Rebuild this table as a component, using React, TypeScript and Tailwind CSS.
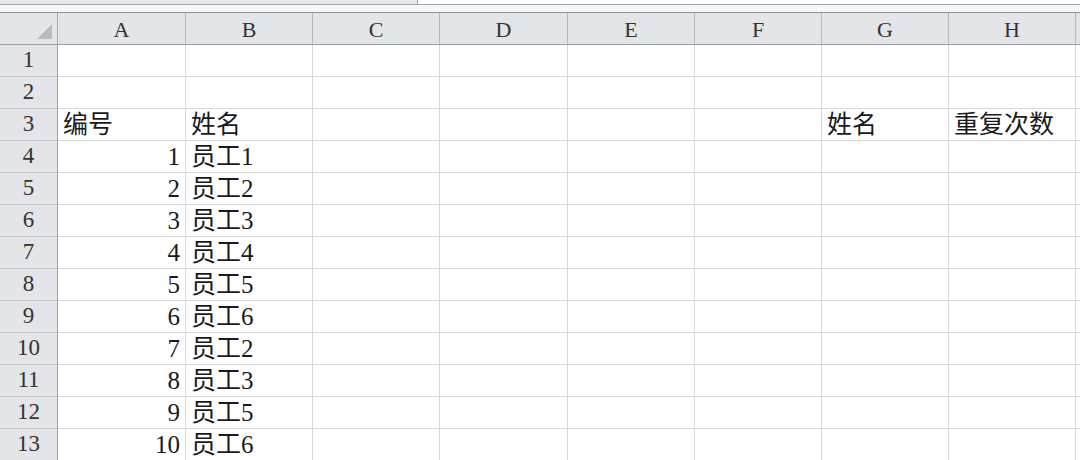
const cols = [
  { key: 'A', w: 'w-[128px]' },
  { key: 'B', w: 'w-[127px]' },
  { key: 'C', w: 'w-[127px]' },
  { key: 'D', w: 'w-[128px]' },
  { key: 'E', w: 'w-[127px]' },
  { key: 'F', w: 'w-[127px]' },
  { key: 'G', w: 'w-[127px]' },
  { key: 'H', w: 'w-[127px]' },
];

type Cell = { text: string; align?: 'left' | 'right' };

const data: Record<number, Record<string, Cell>> = {
  3: {
    A: { text: '编号' },
    B: { text: '姓名' },
    G: { text: '姓名' },
    H: { text: '重复次数' },
  },
};

const staff = [1, 2, 3, 4, 5, 6, 2, 3, 5, 6];
staff.forEach((n, i) => {
  data[i + 4] = {
    A: { text: String(i + 1), align: 'right' },
    B: { text: `员工${n}` },
  };
});

const font = "font-['Liberation_Serif','Noto_Sans_CJK_SC',serif]";

export default function App() {
  const rows = Array.from({ length: 13 }, (_, i) => i + 1);
  return (
    <div className={`w-[1080px] h-[460px] overflow-hidden bg-white ${font}`}>
      {/* formula bar remnant */}
      <div className="flex h-[13px] border-b border-[#8f949a] bg-[#f6f7f8]">
        <div className="h-[5px] w-[418px] border-b border-r border-[#a4a8ad] bg-[#e6e7e9]" />
        <div className="h-[5px] flex-1 border-b border-[#a4a8ad] bg-white" />
      </div>

      {/* column headers */}
      <div className="flex h-[32px] border-b border-[#9a9fa5] bg-[#e3e5e8] text-[22px] text-[#333]">
        <div className="relative w-[58px] shrink-0 border-r border-[#a9adb2]">
          <svg className="absolute left-[37px] top-[11px]" width="15" height="15" viewBox="0 0 15 15">
            <polygon points="15,0 15,15 0,15" fill="#b9bcc0" />
          </svg>
        </div>
        {cols.map((c) => (
          <div
            key={c.key}
            className={`${c.w} shrink-0 border-r border-[#b4b8bd] flex items-center justify-center pt-[2px]`}
          >
            {c.key}
          </div>
        ))}
        <div className="flex-1" />
      </div>

      {rows.map((r) => (
        <div key={r} className="flex h-[32px] text-[25px] leading-none text-[#1a1a1a]">
          <div className="w-[58px] shrink-0 border-r border-b border-r-[#9a9fa5] border-b-[#c4c7cb] bg-[#e3e5e8] text-[23px] text-[#333] flex items-end justify-center pb-[5px]">
            {r}
          </div>
          {cols.map((c) => {
            const cell = data[r]?.[c.key];
            return (
              <div
                key={c.key}
                className={`${c.w} shrink-0 border-r border-b border-[#d6d8db] flex items-end pb-[3px] px-[5px] whitespace-nowrap ${
                  cell?.align === 'right' ? 'justify-end' : 'justify-start'
                }`}
              >
                {cell?.text}
              </div>
            );
          })}
          <div className="flex-1 border-b border-[#d6d8db]" />
        </div>
      ))}
    </div>
  );
}
